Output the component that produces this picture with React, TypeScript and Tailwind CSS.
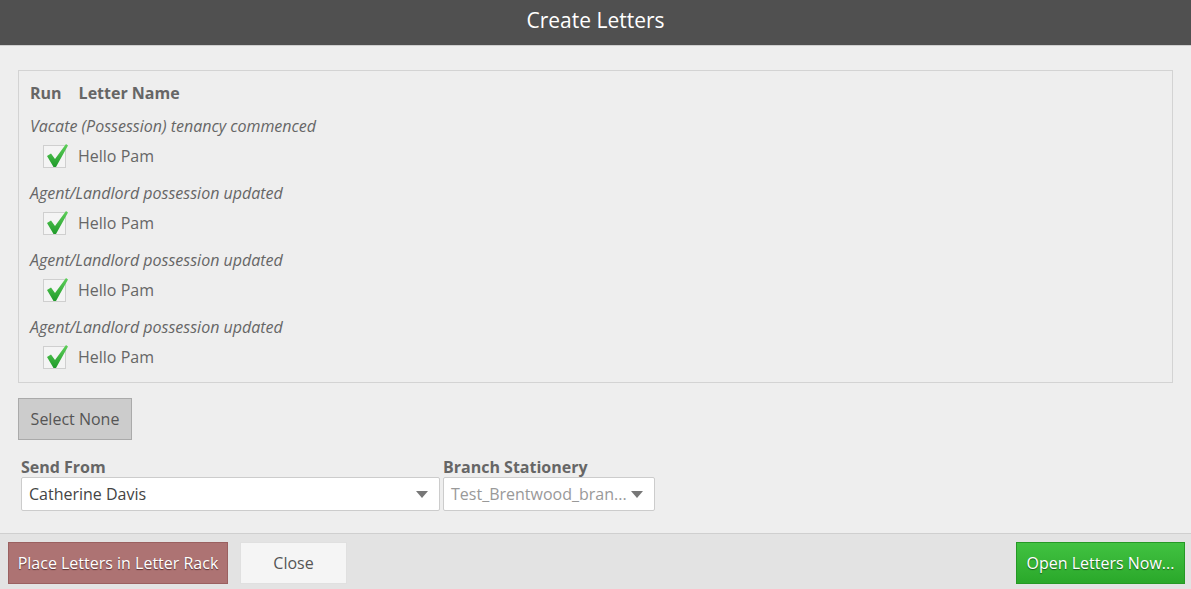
import React from "react";

const Check = () => (
  <div className="w-[23px] h-[23px] border border-[#cfcfcf] bg-[#f4f4f4] relative shrink-0">
    <svg className="absolute left-[1px] top-[-4px]" width="26" height="26" viewBox="0 0 26 26">
      <defs>
        <linearGradient id="g" x1="0" y1="0" x2="0" y2="1">
          <stop offset="0" stopColor="#5fd05a" />
          <stop offset="1" stopColor="#1f9a2a" />
        </linearGradient>
      </defs>
      <path d="M2 14 L6 11.5 L10 17 L21 2 L23 3.5 L11 25 L8.5 25 Z" fill="url(#g)" />
    </svg>
  </div>
);

const Group = ({ label }: { label: string }) => (
  <div className="flex flex-col mb-[7px]">
    <div className="italic h-[26px] flex items-center">{label}</div>
    <div className="flex items-center h-[34px] pl-[13px] gap-[12px]">
      <Check />
      <span>Hello Pam</span>
    </div>
  </div>
);

const Caret = () => (
  <svg width="12" height="7" viewBox="0 0 12 7"><path d="M0 0 H12 L6 7 Z" fill="#777" /></svg>
);

export default function App() {
  return (
    <div
      className="w-[1191px] h-[589px] bg-[#eeeeee] flex flex-col text-[#666666] text-[16px]"
      style={{ fontFamily: "'Segoe UI', 'Open Sans', 'Noto Sans', sans-serif" }}
    >
      <div className="h-[46px] bg-[#505050] border-b border-[#cfcfcf] flex items-center justify-center pb-[4px] text-white text-[21px]">
        Create Letters
      </div>
      <div className="flex-1 flex flex-col px-[18px] pt-[24px]">
        <div className="w-[1155px] h-[313px] border border-[#d3d3d3] px-[11px] pt-[10px]">
          <div className="flex gap-[17px] font-bold h-[24px] items-center">
            <span>Run</span>
            <span>Letter Name</span>
          </div>
          <div className="pt-[8px]">
            <Group label="Vacate (Possession) tenancy commenced" />
            <Group label="Agent/Landlord possession updated" />
            <Group label="Agent/Landlord possession updated" />
            <Group label="Agent/Landlord possession updated" />
          </div>
        </div>
        <button className="mt-[15px] w-[114px] h-[42px] bg-[#cccccc] border border-[#aaaaaa] text-[#555] text-[16px]">
          Select None
        </button>
        <div className="flex gap-[3px] mt-[17px] pl-[3px]">
          <div className="flex flex-col">
            <div className="font-bold h-[20px] leading-[20px]">Send From</div>
            <div className="w-[419px] h-[34px] bg-white border border-[#cccccc] rounded-[2px] flex items-center justify-between pl-[7px] pr-[11px] text-[#444]">
              <span>Catherine Davis</span>
              <Caret />
            </div>
          </div>
          <div className="flex flex-col">
            <div className="font-bold h-[20px] leading-[20px]">Branch Stationery</div>
            <div className="w-[212px] h-[34px] bg-white border border-[#cccccc] rounded-[2px] flex items-center justify-between pl-[7px] pr-[11px] text-[#999]">
              <span>Test_Brentwood_bran...</span>
              <Caret />
            </div>
          </div>
        </div>
      </div>
      <div className="h-[56px] bg-[#e3e3e3] border-t border-[#cfcfcf] flex items-start pt-[8px] px-[8px] gap-[12px]">
        <button className="w-[220px] h-[42px] bg-[#ad7373] border border-[#9a6060] text-[#fff] text-[16px]" style={{ textShadow: "0 1px 1px #5a3030" }}>
          Place Letters in Letter Rack
        </button>
        <button className="w-[107px] h-[42px] bg-[#f5f5f5] border border-[#e0e0e0] text-[#555] text-[16px]">
          Close
        </button>
        <div className="flex-1" />
        <button className="w-[169px] h-[42px] bg-gradient-to-b from-[#41c241] to-[#2aa82a] border border-[#259925] text-white text-[16px] mr-[-2px]" style={{ textShadow: "0 1px 1px #1a5a1a" }}>
          Open Letters Now...
        </button>
      </div>
    </div>
  );
}
